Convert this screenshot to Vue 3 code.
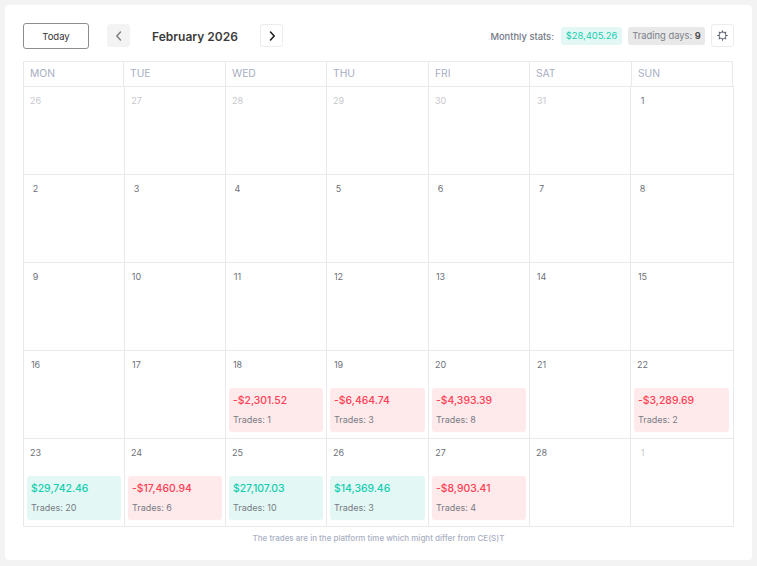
<script setup>
const heads = ['MON', 'TUE', 'WED', 'THU', 'FRI', 'SAT', 'SUN']
const g = (pnl, trades) => ({ pnl, trades, up: pnl[0] === '$' })
const cells = [
  { d: 26, o: 1 }, { d: 27, o: 1 }, { d: 28, o: 1 }, { d: 29, o: 1 }, { d: 30, o: 1 }, { d: 31, o: 1 }, { d: 1 },
  { d: 2 }, { d: 3 }, { d: 4 }, { d: 5 }, { d: 6 }, { d: 7 }, { d: 8 },
  { d: 9 }, { d: 10 }, { d: 11 }, { d: 12 }, { d: 13 }, { d: 14 }, { d: 15 },
  { d: 16 }, { d: 17 },
  { d: 18, t: g('-$2,301.52', 1) }, { d: 19, t: g('-$6,464.74', 3) }, { d: 20, t: g('-$4,393.39', 8) },
  { d: 21 }, { d: 22, t: g('-$3,289.69', 2) },
  { d: 23, t: g('$29,742.46', 20) }, { d: 24, t: g('-$17,460.94', 6) }, { d: 25, t: g('$27,107.03', 10) },
  { d: 26, t: g('$14,369.46', 3) }, { d: 27, t: g('-$8,903.41', 4) }, { d: 28 }, { d: 1, o: 1 }
]
</script>

<template>
  <div class="page">
    <main class="card">
      <header class="bar">
        <button class="today">Today</button>
        <button class="nav prev" aria-label="Previous month">
          <svg width="12" height="12" viewBox="0 0 12 12"><path d="M7.5 2 L3.8 6 L7.5 10" /></svg>
        </button>
        <h1 class="month">February 2026</h1>
        <button class="nav next" aria-label="Next month">
          <svg width="12" height="12" viewBox="0 0 12 12"><path d="M4.5 2 L8.2 6 L4.5 10" /></svg>
        </button>
        <div class="stats">
          <span class="label">Monthly stats:</span>
          <span class="pill profit">$28,405.26</span>
          <span class="pill days">Trading days: <b>9</b></span>
          <button class="nav gear" aria-label="Settings">
            <svg width="11" height="11" viewBox="0 0 24 24">
              <circle cx="12" cy="12" r="7.5" />
              <path d="M12 1.5v3M12 19.5v3M1.5 12h3M19.5 12h3M4.6 4.6l2 2M17.4 17.4l2 2M4.6 19.400l2-2M17.4 6.6l2-2" />
            </svg>
          </button>
        </div>
      </header>

      <div class="heads">
        <div v-for="h in heads" :key="h" class="head">{{ h }}</div>
      </div>
      <div class="grid">
        <div v-for="(c, i) in cells" :key="i" class="cell">
          <span class="num" :class="{ other: c.o }">{{ c.d }}</span>
          <div v-if="c.t" class="trade" :class="c.t.up ? 'up' : 'down'">
            <div class="pnl">{{ c.t.pnl }}</div>
            <div class="count">Trades: {{ c.t.trades }}</div>
          </div>
        </div>
      </div>
      <p class="note">The trades are in the platform time which might differ from CE(S)T</p>
    </main>
  </div>
</template>

<style>
html, body { margin: 0; background: #f3f3f3; }
</style>

<style scoped>
.page { width: 757px; height: 566px; padding: 5px 5px 6px 5px; box-sizing: border-box; font-family: Inter, "Liberation Sans", sans-serif; }
.card { width: 747px; height: 555px; background: #fff; border-radius: 4px; padding: 18px 18px 0 18px; box-sizing: border-box; }
.bar { display: flex; align-items: center; height: 26px; margin-bottom: 12px; }
button { font-family: inherit; background: #fff; padding: 0; margin: 0; box-sizing: border-box; cursor: pointer; }
.today { width: 66px; height: 26px; border: 1px solid #8d8d8d; border-radius: 3px; font-size: 9.5px; font-weight: 400; color: #333; margin-right: 18px; }
.nav { width: 23px; height: 23px; border: 1px solid #ececec; border-radius: 3px; display: flex; align-items: center; justify-content: center; position: relative; top: -0.5px; }
.nav path, .nav circle { fill: none; stroke-linecap: round; stroke-linejoin: round; }
.prev { background: #f3f3f3; border-color: #f3f3f3; }
.prev path { stroke: #808080; stroke-width: 1.5; }
.next path { stroke: #222; stroke-width: 1.6; }
.month { width: 130px; margin: 0; text-align: center; font-size: 12px; font-weight: 600; color: #3b3b3b; }
.stats { margin-left: auto; display: flex; align-items: center; }
.label { font-size: 9.4px; font-weight: 500; color: #737886; margin-right: 7px; }
.pill { height: 18px; line-height: 18px; font-size: 9.4px; border-radius: 3px; box-sizing: border-box; text-align: center; white-space: nowrap; margin-right: 6px; }
.profit { background: #e3f8f5; color: #14cdb0; width: 61px; }
.days { background: #e9e9e9; color: #7b7f88; width: 77px; }
.days b { color: #444; font-weight: 600; }
.gear circle, .gear path { stroke: #5c6270; stroke-width: 2.2; }
.heads { display: grid; grid-template-columns: 100px 102px 101px 102px 101px 102px 102px; width: 710px; height: 25px; box-sizing: border-box; border-top: 1px solid #e9e9e9; border-right: 1px solid #e9e9e9; }
.head { font-size: 10.3px; line-height: 23px; color: #a7aec2; padding-left: 6px; border-left: 1px solid #e9e9e9; }
.grid { display: grid; grid-template-columns: 101px 101px 101px 102px 101px 101px 103px; grid-auto-rows: 88px; width: 711px; box-sizing: border-box; border-top: 1px solid #e9e9e9; border-left: 1px solid #e9e9e9; }
.cell { box-sizing: border-box; border-right: 1px solid #e9e9e9; border-bottom: 1px solid #e9e9e9; padding: 8px 3px 0 3px; display: flex; flex-direction: column; }
.cell:nth-child(7n) { padding-right: 4px; }
.num { font-size: 9px; line-height: 12px; width: 17px; text-align: center; color: #6d7079; }
.num.other { color: #c8c8cc; }
.trade { margin-top: 17px; height: 44px; border-radius: 3px; box-sizing: border-box; padding: 4px 4px 0; }
.up { background: #e3f8f5; }
.down { background: #ffeaeb; }
.pnl { font-size: 10.4px; line-height: 17px; font-weight: 500; }
.up .pnl { color: #14cdb0; }
.down .pnl { color: #fd4053; }
.count { font-size: 9px; line-height: 12px; margin-top: 5px; color: #777a84; }
.note { margin: 6px 0 0; text-align: center; font-size: 8px; line-height: 10px; font-weight: 500; color: #a9afc2; width: 711px; }
</style>
